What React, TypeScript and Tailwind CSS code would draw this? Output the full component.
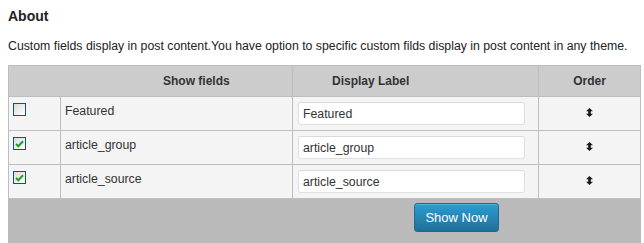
import React from "react";

const rows = [
  { name: "Featured", checked: false },
  { name: "article_group", checked: true },
  { name: "article_source", checked: true },
];

function Checkbox({ checked }: { checked: boolean }) {
  return (
    <div className="w-[13px] h-[13px] border border-[#1c4f7e] bg-gradient-to-br from-[#dcdcd8] to-[#ffffff] flex items-center justify-center">
      {checked && (
        <svg width="9" height="8" viewBox="0 0 9 8">
          <path d="M1 4 L3.3 6.3 L8 1.3" fill="none" stroke="#21a121" strokeWidth="2" />
        </svg>
      )}
    </div>
  );
}

function OrderIcon() {
  return (
    <svg width="7" height="9" viewBox="0 0 7 9">
      <path d="M3.5 0 L7 3.2 H4.8 V5.8 H7 L3.5 9 L0 5.8 H2.2 V3.2 H0 Z" fill="#1a1a1a" />
    </svg>
  );
}

export default function App() {
  return (
    <div className="bg-white w-[644px] h-[243px] overflow-hidden pl-[8px] text-[#333] font-['Liberation_Sans',Arial,sans-serif]">
      <div className="pt-[8px] text-[14px] leading-[16px] font-bold text-[#222]">About</div>
      <div className="mt-[14px] text-[12.3px] leading-[16px] text-[#222] whitespace-nowrap">
        Custom fields display in post content.You have option to specific custom filds display in post content in any theme.
      </div>
      <div className="mt-[11px] w-[633px] border-t border-l border-[#bdbdbd]">
        <div className="flex h-[31px] bg-[#cccccc] border-b border-[#bdbdbd] text-[12px] font-bold text-[#333]">
          <div className="w-[284px] border-r border-[#bdbdbd] pl-[154px] flex items-center">Show fields</div>
          <div className="w-[246px] border-r border-[#bdbdbd] pl-[39px] flex items-center">Display Label</div>
          <div className="w-[102px] border-r border-[#bdbdbd] flex items-center justify-center">Order</div>
        </div>
        {rows.map((r) => (
          <div key={r.name} className="flex h-[34px] bg-[#f4f4f4] border-b border-[#bdbdbd] text-[12.3px]">
            <div className="w-[52px] border-r border-[#bdbdbd] pl-[4px] pt-[6px]">
              <Checkbox checked={r.checked} />
            </div>
            <div className="w-[232px] border-r border-[#bdbdbd] pl-[4px] pt-[6px] leading-[16px] text-[#333]">
              {r.name}
            </div>
            <div className="w-[246px] border-r border-[#bdbdbd] pl-[5px] pt-[5px]">
              <div className="w-[227px] h-[23px] bg-white border border-[#e0e0e0] border-t-[#dadada] rounded-[3px] pl-[4px] flex items-center leading-[16px] text-[#333]">
                {r.name}
              </div>
            </div>
            <div className="w-[102px] border-r border-[#bdbdbd] flex justify-center pt-[11px]">
              <OrderIcon />
            </div>
          </div>
        ))}
      </div>
      <div className="w-[633px] h-[50px] bg-[#bababa] pl-[406px] pt-[4px]">
        <div className="w-[85px] h-[29px] rounded-[3px] border border-[#1e6a92] bg-gradient-to-b from-[#2c9dd2] to-[#1f7099] text-white text-[13px] flex items-center justify-center shadow-[inset_0_1px_0_rgba(120,200,240,0.5)]">
          Show Now
        </div>
      </div>
    </div>
  );
}
